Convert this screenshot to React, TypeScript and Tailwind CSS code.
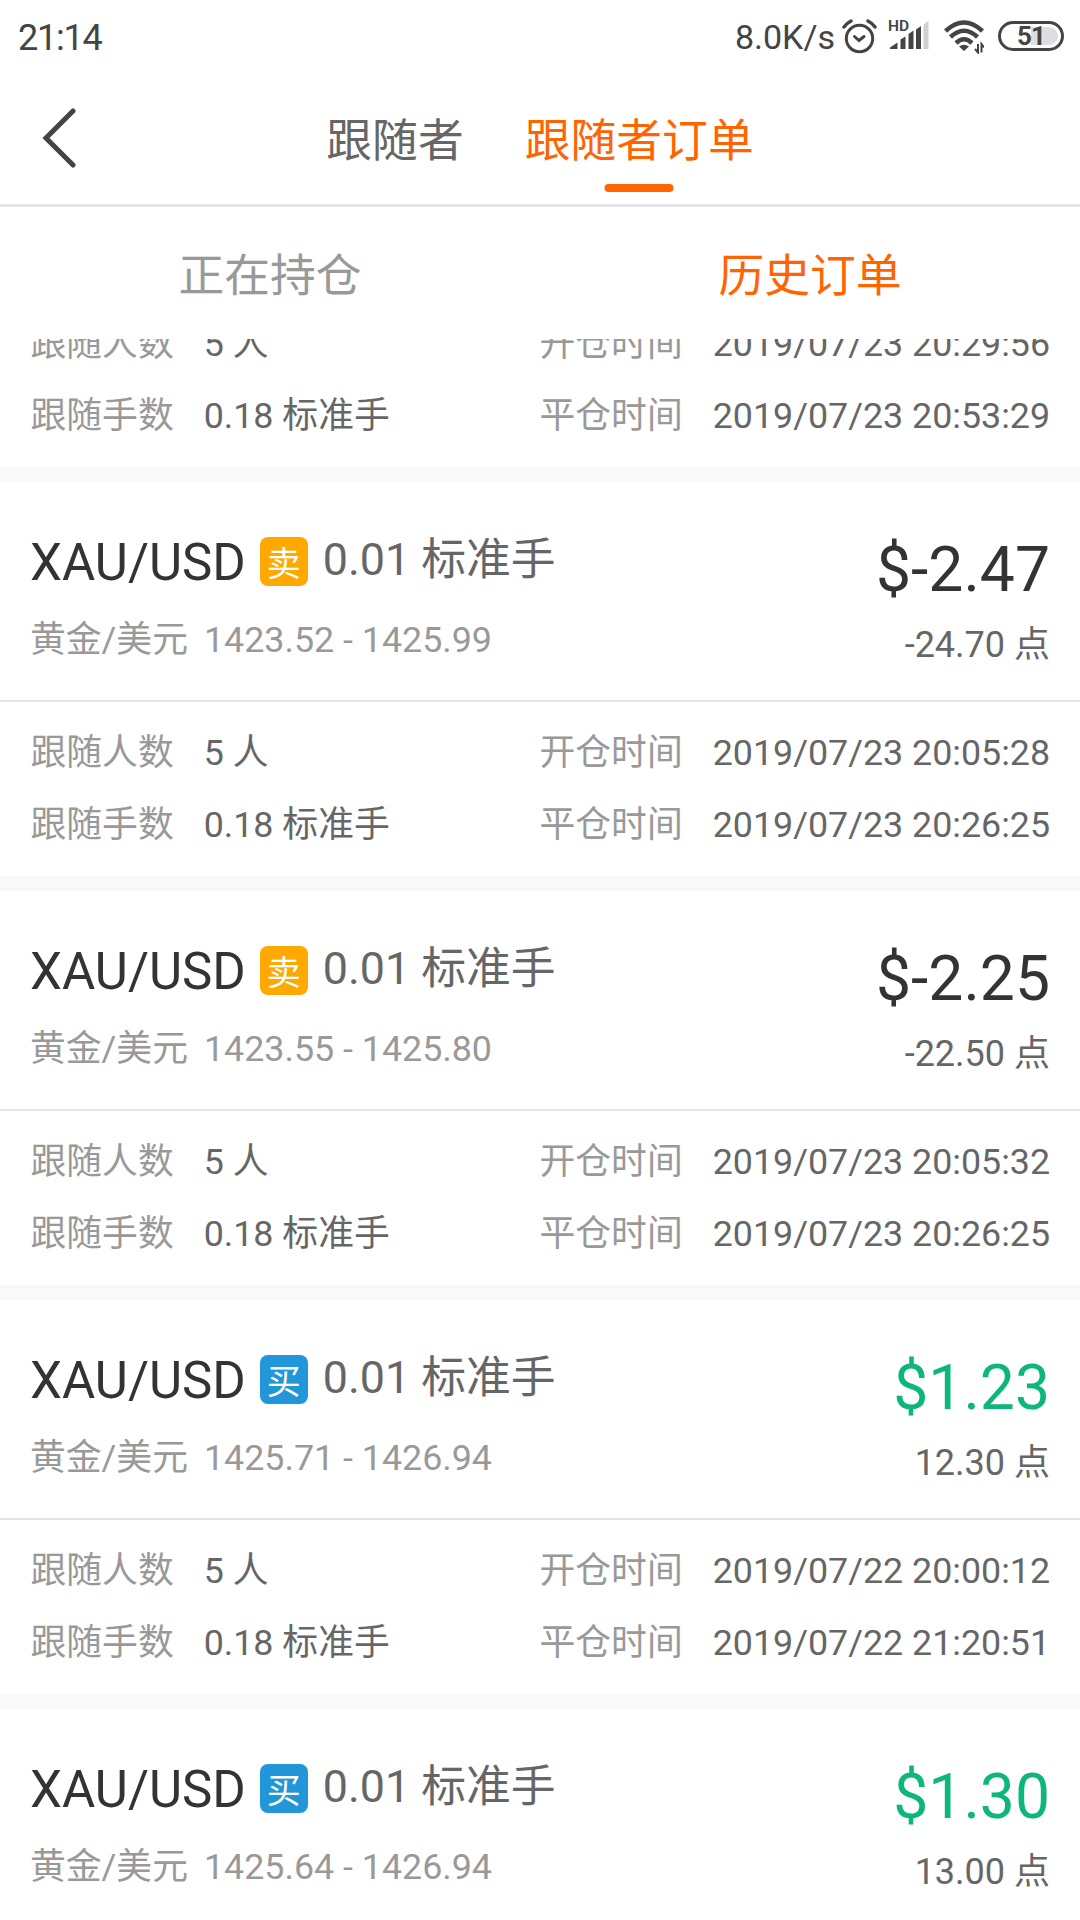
interface Order {
  side: 'buy' | 'sell';
  lots: string;
  open: string;
  close: string;
  profit: string;
  points: string;
  followers: string;
  followLots: string;
  openTime: string;
  closeTime: string;
}

const ORDERS: Order[] = [
  {
    side: 'sell',
    lots: '0.01',
    open: '1423.52',
    close: '1425.99',
    profit: '-2.47',
    points: '-24.70',
    followers: '5',
    followLots: '0.18',
    openTime: '2019/07/23 20:05:28',
    closeTime: '2019/07/23 20:26:25',
  },
  {
    side: 'sell',
    lots: '0.01',
    open: '1423.55',
    close: '1425.80',
    profit: '-2.25',
    points: '-22.50',
    followers: '5',
    followLots: '0.18',
    openTime: '2019/07/23 20:05:32',
    closeTime: '2019/07/23 20:26:25',
  },
  {
    side: 'buy',
    lots: '0.01',
    open: '1425.71',
    close: '1426.94',
    profit: '1.23',
    points: '12.30',
    followers: '5',
    followLots: '0.18',
    openTime: '2019/07/22 20:00:12',
    closeTime: '2019/07/22 21:20:51',
  },
  {
    side: 'buy',
    lots: '0.01',
    open: '1425.64',
    close: '1426.94',
    profit: '1.30',
    points: '13.00',
    followers: '5',
    followLots: '0.18',
    openTime: '2019/07/22 20:00:09',
    closeTime: '2019/07/22 21:20:51',
  },
];

function StatusBar() {
  return (
    <div className="flex h-[72px] shrink-0 items-center justify-between pr-4 pl-[18px] text-[#444]">
      <span className="pt-[3px] text-[36px] leading-[72px] tracking-[-1.2px]">21:14</span>
      <div className="flex h-[72px] items-center">
        <span className="mr-[7px] pt-[2px] text-[34px] leading-[72px]">8.0K/s</span>
        <svg className="mr-[10px] h-[36px] w-[36px]" viewBox="0 0 36 36" fill="none" stroke="currentColor">
          <circle cx="17.500" cy="20.500" r="13.200" strokeWidth="3" />
          <path d="M12.500 18.500 17 22.500l5-4" strokeWidth="3" strokeLinecap="round" />
          <path d="M2 9Q5 5 9 3M33 9Q30 5 26 3" strokeWidth="3.500" strokeLinecap="round" />
        </svg>
        <svg className="mr-[14px] h-[36px] w-[42px]" viewBox="0 0 42 36" fill="currentColor">
          <text x="0" y="13" fontSize="15.500" fontWeight="600" fontFamily="Roboto, sans-serif">HD</text>
          <path d="M2 31v-1.500l7.500-5V31zM12.500 31V21.500l5-3V31zM20.500 31V16l5-3.500V31zM28 31V11.500l5-3.500v23z" />
          <path d="M35.500 31V6.500l5-3.500v28z" fill="#d0d0d0" />
        </svg>
        <svg className="mr-[14px] h-[36px] w-[40px]" viewBox="0 0 40 36" fill="none" stroke="currentColor" strokeWidth="4.500">
          <path d="M1.500 13Q20-4 38.500 13M6.500 19Q20 6.500 33.500 19M12 25Q20 17.500 28 25" />
          <path d="M15 28.500Q20 25 25 28.500L20 33z" fill="currentColor" stroke="none" />
          <path d="M34 26v8.500l-3-3.500M37.500 34.500V26l2.500 3.500" strokeWidth="2" />
        </svg>
        <div className="relative flex h-[30px] w-[66px] items-center justify-center rounded-full border-[3px] border-current">
          <span className="absolute top-[3px] right-[3px] h-[18px] w-[27px] rounded-r-full bg-[#dedede]" />
          <span className="relative text-[26px] leading-none font-bold tracking-[-1px]">51</span>
        </div>
      </div>
    </div>
  );
}

function NavBar() {
  return (
    <header className="grid h-[135px] shrink-0 grid-cols-[1fr_auto_1fr] border-b-[3px] border-[#e5e5e5]">
      <button className="pl-[41px]" aria-label="返回">
        <svg className="h-[60px] w-[36px]" viewBox="0 0 36 60" fill="none" stroke="#444" strokeWidth="5" strokeLinecap="round">
          <path d="M32 3 5 30l27 27" />
        </svg>
      </button>
      <nav className="flex gap-[61px] text-[45.8px] leading-[125px]">
        <button className="pt-[7px] text-[#666]">跟随者</button>
        <button className="relative pt-[7px] text-[#ff6400]">
          跟随者订单
          <span className="absolute bottom-[12px] left-1/2 h-[8px] w-[69px] -translate-x-1/2 rounded-full bg-[#ff6400]" />
        </button>
      </nav>
    </header>
  );
}

function Detail({ label, value }: { label: string; value: string }) {
  return (
    <div className="flex gap-[30px] whitespace-nowrap">
      <span className="text-[#999]">{label}</span>
      <span className="text-[#666]">{value}</span>
    </div>
  );
}

function OrderDetails({ order }: { order: Pick<Order, 'followers' | 'followLots' | 'openTime' | 'closeTime'> }) {
  return (
    <div className="grid grid-cols-[509px_1fr] pt-[15px] pb-[15px] pl-[30.5px] text-[35.8px] leading-[72px]">
      <Detail label="跟随人数" value={`${order.followers} 人`} />
      <Detail label="开仓时间" value={order.openTime} />
      <Detail label="跟随手数" value={`${order.followLots} 标准手`} />
      <Detail label="平仓时间" value={order.closeTime} />
    </div>
  );
}

function OrderCard({ order }: { order: Order }) {
  const sell = order.side === 'sell';
  const loss = order.profit.startsWith('-');

  return (
    <article className="border-t-[15px] border-[#f9f9f9]">
      <div className="flex h-[220px] justify-between border-b-2 border-[#e5e5e5] pr-[30px] pl-[30px]">
        <div className="pt-[51px]">
          <div className="flex h-[60px] items-center leading-[60px]">
            <span className="text-[51px] text-[#333]">XAU/USD</span>
            <span
              className={`mr-[15px] mb-[3px] ml-[14px] flex h-[49px] w-12 items-center justify-center rounded-lg pt-1 text-[34px] leading-none text-white ${
                sell ? 'bg-[#ffa800]' : 'bg-[#2196d9]'
              }`}
            >
              {sell ? '卖' : '买'}
            </span>
            <span className="pb-[6px] text-[44.8px] text-[#666]">{order.lots} 标准手</span>
          </div>
          <div className="mt-[25px] flex gap-4 text-[35.8px] leading-[44px] text-[#999]">
            <span>黄金/美元</span>
            <span>
              {order.open} - {order.close}
            </span>
          </div>
        </div>
        <div className="pt-[50px] text-right">
          <div className={`text-[62.4px] leading-[76px] ${loss ? 'text-[#333]' : 'text-[#0db779]'}`}>${order.profit}</div>
          <div className="mt-[15px] text-[36px] leading-[44px] text-[#666]">{order.points} 点</div>
        </div>
      </div>
      <OrderDetails order={order} />
    </article>
  );
}

export default function App() {
  return (
    <div className="flex h-[1920px] w-[1080px] flex-col overflow-hidden bg-white font-['Roboto','Noto_Sans_CJK_SC',sans-serif]">
      <StatusBar />
      <NavBar />
      <div className="grid h-[132px] shrink-0 grid-cols-2 text-[45.8px] leading-[124px]">
        <button className="pt-2 text-[#999]">正在持仓</button>
        <button className="pt-2 text-[#ff6400]">历史订单</button>
      </div>
      <main className="min-h-0 flex-1 overflow-hidden">
        {/* tail of the order scrolled under the tabs */}
        <div className="-mt-[46px]">
          <OrderDetails
            order={{
              followers: '5',
              followLots: '0.18',
              openTime: '2019/07/23 20:29:56',
              closeTime: '2019/07/23 20:53:29',
            }}
          />
        </div>
        {ORDERS.map((order) => (
          <OrderCard key={order.openTime} order={order} />
        ))}
      </main>
    </div>
  );
}
